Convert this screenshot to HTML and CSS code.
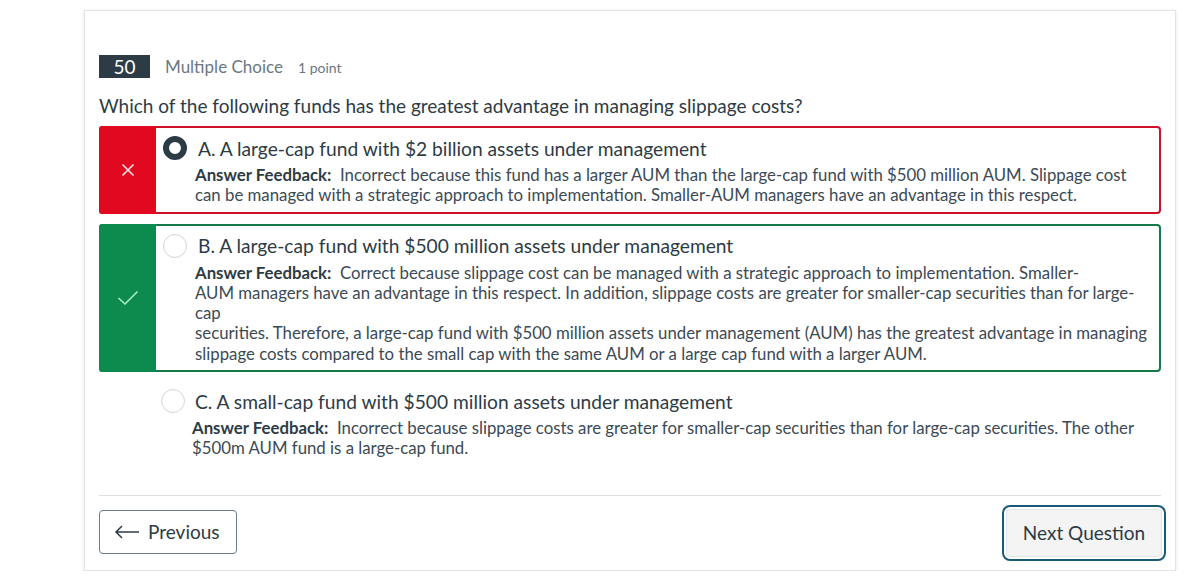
FILE: index.html
```html
<!DOCTYPE html>
<html lang="en">
<head>
<meta charset="utf-8">
<title>Quiz question 50</title>
<link rel="stylesheet" href="styles.css">
</head>
<body>
<div class="card">
  <div class="q-header">
    <span class="q-num">50</span>
    <span class="q-type">Multiple Choice</span>
    <span class="q-points">1 point</span>
  </div>
  <div class="q-text">Which of the following funds has the greatest advantage in managing slippage costs?</div>

  <div class="answer answer-wrong">
    <div class="strip">
      <svg width="16" height="16" viewBox="0 0 16 16"><path d="M2.5 2.5 L13.5 13.5 M13.5 2.5 L2.5 13.5" stroke="#fde6e8" stroke-width="1.6" fill="none"/></svg>
    </div>
    <div class="answer-body">
      <div class="answer-line">
        <span class="radio radio-selected"></span>
        <span class="answer-label">A. A large-cap fund with $2 billion assets under management</span>
      </div>
      <div class="feedback"><b>Answer Feedback:</b>&nbsp; Incorrect because this fund has a larger AUM than the large-cap fund with $500 million AUM. Slippage cost<br>can be managed with a strategic approach to implementation. Smaller-AUM managers have an advantage in this respect.</div>
    </div>
  </div>

  <div class="answer answer-right">
    <div class="strip">
      <svg width="22" height="16" viewBox="0 0 22 16"><path d="M1.5 8 L8 14 L20.5 1.5" stroke="#a8f0c4" stroke-width="1.6" fill="none"/></svg>
    </div>
    <div class="answer-body">
      <div class="answer-line">
        <span class="radio"></span>
        <span class="answer-label">B. A large-cap fund with $500 million assets under management</span>
      </div>
      <div class="feedback"><b>Answer Feedback:</b>&nbsp; Correct because slippage cost can be managed with a strategic approach to implementation. Smaller-<br>AUM managers have an advantage in this respect. In addition, slippage costs are greater for smaller-cap securities than for large-<br>cap<br>securities. Therefore, a large-cap fund with $500 million assets under management (AUM) has the greatest advantage in managing<br>slippage costs compared to the small cap with the same AUM or a large cap fund with a larger AUM.</div>
    </div>
  </div>

  <div class="answer answer-plain">
    <div class="answer-body">
      <div class="answer-line">
        <span class="radio"></span>
        <span class="answer-label">C. A small-cap fund with $500 million assets under management</span>
      </div>
      <div class="feedback"><b>Answer Feedback:</b>&nbsp; Incorrect because slippage costs are greater for smaller-cap securities than for large-cap securities. The other<br>$500m AUM fund is a large-cap fund.</div>
    </div>
  </div>

  <div class="footer">
    <button class="btn btn-prev">
      <svg width="26" height="14" viewBox="0 0 26 14"><path d="M25 7 H2 M8 1 L2 7 L8 13" stroke="#2d3b45" stroke-width="1.5" fill="none"/></svg>
      Previous
    </button>
    <button class="btn btn-next">Next Question</button>
  </div>
</div>
</body>
</html>
```
FILE: styles.css
```css
* { box-sizing: border-box; }
html, body { margin: 0; padding: 0; background: #fff; }
body {
  font-family: Lato, "Open Sans", Arial, sans-serif;
  color: #2d3b45;
}
.card {
  margin: 10px 0 0 84px;
  width: 1092px;
  height: 561px;
  border: 1px solid #e4e4e4;
  box-shadow: 0 1px 3px rgba(0,0,0,0.12);
  padding: 44px 14px 0 14px;
}
.q-header {
  display: flex;
  align-items: center;
  height: 23px;
}
.q-num {
  background: #2d3b45;
  color: #fff;
  width: 51px;
  height: 23px;
  font-size: 19px;
  line-height: 23px;
  text-align: center;
}
.q-type {
  margin-left: 15px;
  font-size: 17px;
  color: #6b7780;
}
.q-points {
  margin-left: 15px;
  font-size: 14px;
  color: #6b7780;
  padding-top: 2px;
}
.q-text {
  margin-top: 15px;
  font-size: 19px;
  line-height: 26px;
  height: 26px;
}
.answer {
  display: flex;
  border: 2px solid transparent;
  border-radius: 4px;
}
.answer-wrong { border-color: #d0102a; margin-top: 7px; }
.answer-right { border-color: #157a4a; margin-top: 10px; }
.answer-plain { margin-top: 8px; }
.strip {
  width: 57px;
  flex: none;
  display: flex;
  align-items: center;
  justify-content: center;
  margin: -2px 0 -2px -2px;
  border-radius: 3px 0 0 3px;
}
.answer-wrong .strip { background: #e1091f; }
.answer-right .strip { background: #0d8a4d; }
.answer-body {
  padding: 8px 6px 6px 7px;
}
.answer-plain .answer-body { padding-left: 60px; padding-top: 7px; }
.answer-line {
  display: flex;
  align-items: center;
  height: 24px;
}
.radio {
  width: 24px;
  height: 24px;
  border-radius: 50%;
  border: 1px solid #d4d8db;
  background: #fff;
  box-shadow: inset 0 0 1px rgba(0,0,0,0.08);
  flex: none;
}
.radio-selected {
  border: 6px solid #2d3b45;
}
.answer-label {
  margin-left: 11px;
  font-size: 19.2px;
  white-space: nowrap;
}
.answer-plain .answer-label { margin-left: 10px; }
.feedback {
  margin-top: 5px;
  margin-left: 32px;
  font-size: 16.8px;
  line-height: 20.3px;
  color: #3b4a55;
  white-space: nowrap;
}
.answer-plain .feedback { margin-left: 31px; }
.feedback b { font-weight: 700; color: #2d3b45; }
.footer {
  margin-top: 28px;
  border-top: 1px solid #dcdfe2;
  display: flex;
  justify-content: space-between;
  align-items: flex-start;
  padding-top: 14px;
}
.btn {
  font-family: inherit;
  font-size: 19px;
  color: #2d3b45;
  border-radius: 4px;
  cursor: pointer;
}
.btn-prev {
  width: 138px;
  height: 44px;
  background: #fff;
  border: 1px solid #6f7a82;
  display: flex;
  align-items: center;
  gap: 8px;
  padding: 0 0 0 14px;
}
.btn-next {
  width: 156px;
  height: 48px;
  margin-top: -1px;
  margin-right: -1px;
  background: #f4f4f4;
  border: 1px solid #e2e4e6;
  outline: 2px solid #1a5a78;
  outline-offset: 2px;
  border-radius: 4px;
}
```
